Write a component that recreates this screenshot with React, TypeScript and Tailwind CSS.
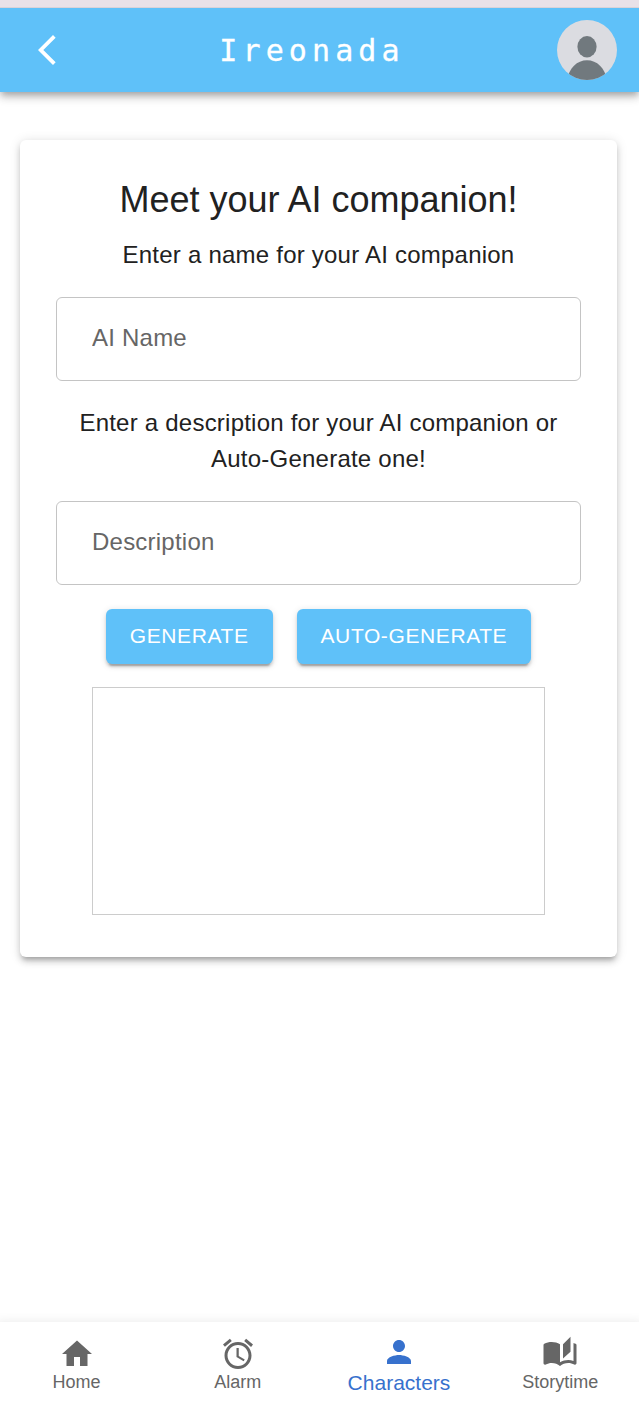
import React from "react";

const icons = {
  home: "M10 20v-6h4v6h5v-8h3L12 3 2 12h3v8z",
  alarm:
    "M22 5.72l-4.6-3.86-1.29 1.53 4.6 3.86L22 5.72zM7.88 3.39L6.6 1.86 2 5.71l1.29 1.53 4.59-3.85zM12.5 8H11v6l4.75 2.85.75-1.23-4-2.37V8zM12 4c-4.97 0-9 4.03-9 9s4.02 9 9 9c4.97 0 9-4.03 9-9s-4.03-9-9-9zm0 16c-3.87 0-7-3.13-7-7s3.13-7 7-7 7 3.13 7 7-3.13 7-7 7z",
  person:
    "M12 12c2.21 0 4-1.79 4-4s-1.79-4-4-4-4 1.79-4 4 1.79 4 4 4zm0 2c-2.67 0-8 1.34-8 4v2h16v-2c0-2.66-5.33-4-8-4z",
  story:
    "M19 .5l-5 5V15l5-4.5V.5zM22.47 5.2c-.47-.24-.96-.44-1.47-.61v12.03c-1.14-.41-2.31-.62-3.5-.62-1.9 0-3.78.54-5.5 1.58V5.48C10.38 4.55 8.51 4 6.5 4c-1.79 0-3.48.44-4.97 1.2-.33.16-.53.51-.53.88v12.08c0 .58.47.99 1 .99.16 0 .32-.04.48-.12C3.69 18.4 5.05 18 6.5 18c2.07 0 3.98.82 5.5 2 1.52-1.18 3.43-2 5.5-2 1.45 0 2.81.4 4.02 1.04.16.08.32.12.48.12.52 0 1-.41 1-.99V6.08c0-.37-.2-.72-.53-.88z",
  back: "M17.77 3.77 16 2 6 12l10 10 1.77-1.77L9.54 12z",
};

function Icon({ name }: { name: keyof typeof icons }) {
  return (
    <svg viewBox="0 0 24 24" className="block size-9 shrink-0 fill-current" aria-hidden="true">
      <path d={icons[name]} />
    </svg>
  );
}

function Avatar() {
  return (
    <svg viewBox="0 0 60 60" className="block size-[60px] overflow-hidden rounded-full bg-[#dbdce1]" aria-hidden="true">
      <ellipse cx="30" cy="26.7" rx="9.6" ry="10.7" fill="#71797e" />
      <path d="M10 60C12 48 20 40.2 30 40.2S48 48 50 60z" fill="#71797e" />
    </svg>
  );
}

function Header() {
  return (
    <header className="flex h-[84px] shrink-0 items-center justify-between bg-[#5fc1f9] pr-[22px] pl-[29px] text-white shadow-[0_3px_6px_-1.5px_rgba(0,0,0,0.2),0_6px_7.5px_0_rgba(0,0,0,0.14),0_1.5px_15px_0_rgba(0,0,0,0.12)]">
      <button className="w-[60px]" aria-label="Back">
        <Icon name="back" />
      </button>
      <h1 className="pt-0.5 pr-[22px] font-['DejaVu_Sans_Mono',monospace] text-[30px] leading-9 tracking-[5.1px] [-webkit-text-stroke:0.3px_white]">
        Ireonada
      </h1>
      <Avatar />
    </header>
  );
}

function Field({ label }: { label: string }) {
  return (
    <input
      placeholder={label}
      aria-label={label}
      className="h-[84px] w-full rounded-[6px] border-[1.5px] border-[#c4c4c4] px-[35px] pb-0.5 text-2xl tracking-[0.225px] placeholder:text-[#666]"
    />
  );
}

function ActionButton({ children }: { children: string }) {
  return (
    <button className="h-[55px] rounded-[6px] bg-[#5fc1f9] px-6 pb-0.5 text-[21px] leading-[36px] tracking-[0.6px] text-white shadow-[0_4.5px_1.5px_-3px_rgba(0,0,0,0.2),0_3px_3px_0_rgba(0,0,0,0.14),0_1.5px_7.5px_0_rgba(0,0,0,0.12)]">
      {children}
    </button>
  );
}

const tabs: { label: string; icon: keyof typeof icons; active?: boolean }[] = [
  { label: "Home", icon: "home" },
  { label: "Alarm", icon: "alarm" },
  { label: "Characters", icon: "person", active: true },
  { label: "Storytime", icon: "story" },
];

function BottomNav() {
  return (
    <nav className="-mx-1 mt-auto -mb-[5px] grid h-[84px] shrink-0 grid-cols-[repeat(4,161.2px)] bg-white shadow-[0_3px_1.5px_-1.5px_rgba(0,0,0,0.2),0_1.5px_1.5px_0_rgba(0,0,0,0.14),0_1.5px_12px_0_rgba(0,0,0,0.12)]">
      {tabs.map((t) => (
        <button
          key={t.label}
          className={
            t.active
              ? "flex flex-col items-center pt-3 text-[21px] leading-[25px] text-[#3771cd]"
              : "flex flex-col items-center pt-[14px] text-[18px] leading-5 text-[#666]"
          }
        >
          <Icon name={t.icon} />
          <span>{t.label}</span>
        </button>
      ))}
    </nav>
  );
}

export default function App() {
  return (
    <div className="flex h-[1401px] w-[639px] flex-col overflow-hidden bg-white font-['Liberation_Sans',Arial,sans-serif] text-[#212121]">
      <div className="z-10 h-2 shrink-0 border-b border-[#d9d2d8] bg-[#e8e1e8]" />
      <Header />
      <main className="mt-12 mr-[22px] ml-5 h-[817px] rounded-[6px] px-9 pt-9 text-center shadow-[0_4.5px_4.5px_-3px_rgba(0,0,0,0.2),0_4.5px_6px_0_rgba(0,0,0,0.14),0_1.5px_12px_0_rgba(0,0,0,0.12)]">
        <h2 className="text-[36px] leading-[48px]">Meet your AI companion!</h2>
        <p className="mt-[13px] mb-6 text-2xl leading-9 tracking-[0.225px]">Enter a name for your AI companion</p>
        <Field label="AI Name" />
        <p className="my-6 text-2xl leading-9 tracking-[0.225px]">
          Enter a description for your AI companion or Auto-Generate one!
        </p>
        <Field label="Description" />
        <div className="mt-6 flex justify-center gap-6">
          <ActionButton>GENERATE</ActionButton>
          <ActionButton>AUTO-GENERATE</ActionButton>
        </div>
        <div className="mx-9 mt-[23px] h-[228px] border-[1.5px] border-[#ccc]" />
      </main>
      <BottomNav />
    </div>
  );
}
